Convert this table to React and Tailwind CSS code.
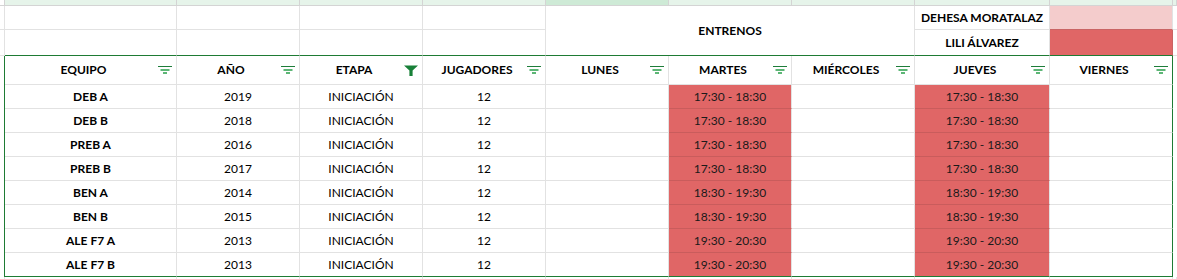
const W = [5, 172, 123, 123, 123, 123, 123, 123, 135, 123, 4]
const WCLS = ['w-[5px]', 'w-[172px]', 'w-[123px]', 'w-[123px]', 'w-[123px]', 'w-[123px]', 'w-[123px]', 'w-[123px]', 'w-[135px]', 'w-[123px]', 'w-[4px]']

const HEADERS = ['EQUIPO', 'AÑO', 'ETAPA', 'JUGADORES', 'LUNES', 'MARTES', 'MIÉRCOLES', 'JUEVES', 'VIERNES']

const T1 = '17:30 - 18:30'
const T2 = '18:30 - 19:30'
const T3 = '19:30 - 20:30'

const ROWS = [
  ['DEB A', '2019', T1],
  ['DEB B', '2018', T1],
  ['PREB A', '2016', T1],
  ['PREB B', '2017', T1],
  ['BEN A', '2014', T2],
  ['BEN B', '2015', T2],
  ['ALE F7 A', '2013', T3],
  ['ALE F7 B', '2013', T3],
]

function FilterIcon() {
  return (
    <svg width="14" height="9" viewBox="0 0 14 9" className="shrink-0">
      <rect x="0" y="0" width="14" height="1" fill="#1e7d3a" />
      <rect x="2.5" y="3" width="9" height="2" fill="#5db676" />
      <rect x="5" y="6" width="4" height="2" fill="#5db676" />
    </svg>
  )
}

function ActiveFilter() {
  return (
    <svg width="14" height="11" viewBox="0 0 14 11" className="shrink-0">
      <polygon points="0,0.5 14,0.5 8.6,5.5 8.6,11 5.4,11 5.4,5.5" fill="#188038" />
    </svg>
  )
}

export default function App() {
  return (
    <div className="w-[1177px] h-[279px] overflow-hidden bg-white text-black font-['Lato','Open_Sans',sans-serif] text-[12px]">
      {/* column header strip */}
      <div className="flex h-[6px]">
        {W.map((_, i) => (
          <div
            key={i}
            className={`${WCLS[i]} h-full border-r border-b border-[#d4d4d4] ${i === 0 ? 'bg-white' : i === 5 ? 'bg-[#ceead6]' : 'bg-[#e6f4ea]'}`}
          />
        ))}
      </div>

      {/* rows 1-2 */}
      <div className="flex h-[50px]">
        {[0, 1, 2, 3, 4].map(i => (
          <div key={i} className={`${WCLS[i]} flex flex-col`}>
            <div className="h-[24px] border-r border-b border-[#e2e2e2]" />
            <div className={`h-[26px] border-r border-b border-r-[#e2e2e2] ${i === 0 ? 'border-b-[#e2e2e2]' : 'border-b-[#1e7b34]'}`} />
          </div>
        ))}
        <div className="w-[369px] flex items-center justify-center font-bold border-r border-b border-r-[#e2e2e2] border-b-[#1e7b34]">
          ENTRENOS
        </div>
        <div className="w-[135px] flex flex-col font-bold">
          <div className="h-[24px] flex items-center justify-center border-r border-b border-[#e2e2e2]">DEHESA MORATALAZ</div>
          <div className="h-[26px] flex items-center justify-center border-r border-b border-r-[#e2e2e2] border-b-[#1e7b34]">LILI ÁLVAREZ</div>
        </div>
        <div className="w-[123px] flex flex-col">
          <div className="h-[24px] bg-[#f4cccc] border-r border-b border-r-[#e2e2e2] border-b-[#c96464]" />
          <div className="h-[26px] bg-[#e06666] border-r border-b border-r-[#c96464] border-b-[#1e7b34]" />
        </div>
        <div className="w-[4px] flex flex-col">
          <div className="h-[24px] border-b border-[#e2e2e2]" />
          <div className="h-[26px] border-b border-[#e2e2e2]" />
        </div>
      </div>

      {/* filter header row */}
      <div className="flex h-[29px]">
        <div className="w-[5px] border-r border-[#1e7b34]" />
        {HEADERS.map((h, i) => (
          <div
            key={h}
            className={`${WCLS[i + 1]} flex items-center border-r border-b border-b-[#e2e2e2] ${i === 8 ? 'border-r-[#1e7b34]' : 'border-r-[#e2e2e2]'} pr-[4px]`}
          >
            <span className="flex-1 text-center font-bold pl-[4px]">{h}</span>
            {h === 'ETAPA' ? <ActiveFilter /> : <FilterIcon />}
          </div>
        ))}
        <div className="w-[4px]" />
      </div>

      {/* data rows */}
      {ROWS.map((r, ri) => {
        const last = ri === ROWS.length - 1
        const cells = [r[0], r[1], 'INICIACIÓN', '12', '', r[2], '', r[2], '']
        return (
          <div key={ri} className="flex h-[24px]">
            <div className="w-[5px] border-r border-[#1e7b34]" />
            {cells.map((c, ci) => {
              const red = ci === 5 || ci === 7
              return (
                <div
                  key={ci}
                  className={`${WCLS[ci + 1]} flex items-center justify-center border-r border-b
                    ${ci === 8 ? 'border-r-[#1e7b34]' : 'border-r-[#e2e2e2]'}
                    ${last ? 'border-b-[#1e7b34]' : red ? 'border-b-[#c95c5c]' : 'border-b-[#e2e2e2]'}
                    ${red ? 'bg-[#e06666] text-[#1a1a1a]' : ''}
                    ${ci === 0 ? 'font-bold' : ''}`}
                >
                  {c}
                </div>
              )
            })}
            <div className="w-[4px]" />
          </div>
        )
      })}

      {/* next row, cut off */}
      <div className="flex h-[4px]">
        {W.map((_, i) => (
          <div key={i} className={`${WCLS[i]} h-full border-r border-[#e2e2e2]`} />
        ))}
      </div>
    </div>
  )
}
